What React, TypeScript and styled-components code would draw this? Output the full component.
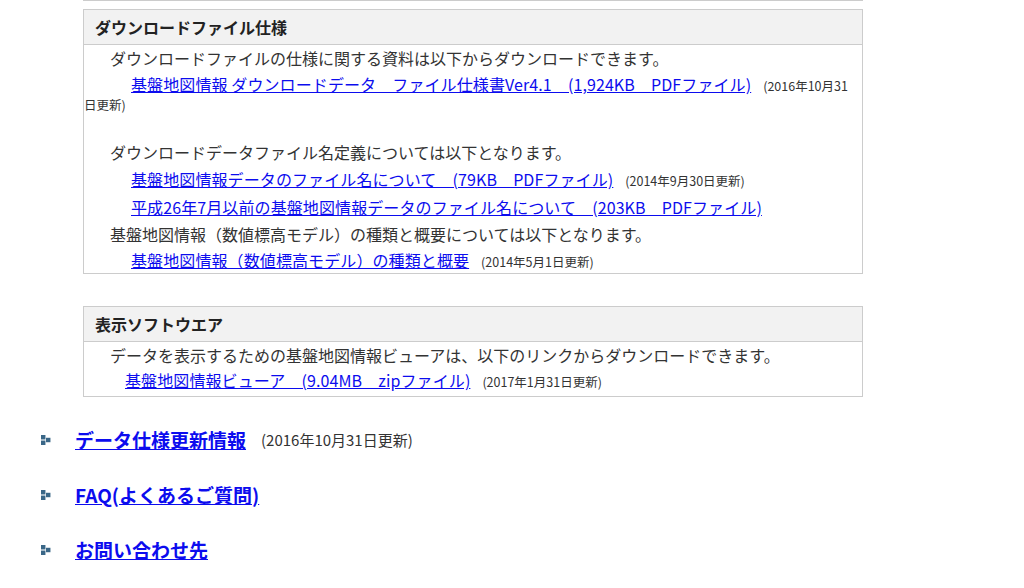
import React from "react";
import styled, { createGlobalStyle } from "styled-components";

const Global = createGlobalStyle`
  html, body { margin: 0; padding: 0; background: #ffffff; }
  body {
    font-family: "Noto Sans CJK JP", "Noto Sans", "Liberation Sans", sans-serif;
    color: #333333;
    font-size: 16px;
  }
  a { color: #0c0cee; }
`;

const Page = styled.div`
  width: 1024px;
  height: 588px;
  overflow: hidden;
`;

const Content = styled.div`
  margin-left: 83px;
  width: 780px;
`;

const PrevEdge = styled.div`
  height: 1px;
  background: #cccccc;
`;

const Box = styled.section<{ $gap: number }>`
  margin-top: ${(p) => p.$gap}px;
  border: 1px solid #cccccc;
  background: #ffffff;
`;

const BoxHeader = styled.h3`
  margin: 0;
  height: 34px;
  line-height: 34px;
  padding-left: 11px;
  background: #f2f2f2;
  border-bottom: 1px solid #cccccc;
  font-size: 16px;
  font-weight: bold;
  color: #222222;
`;

const BoxBody = styled.div<{ $padBottom?: number }>`
  padding-bottom: ${(p) => p.$padBottom ?? 0}px;
`;

const Line = styled.p<{ $indent: number; $lh: number; $mt?: number }>`
  margin: ${(p) => p.$mt ?? 0}px 0 0 0;
  padding-left: ${(p) => p.$indent}px;
  line-height: ${(p) => p.$lh}px;
  height: ${(p) => p.$lh}px;
  white-space: nowrap;
`;

const WrapPara = styled.p<{ $indent: number; $lh: number; $mt?: number }>`
  margin: ${(p) => p.$mt ?? 0}px 0 0 0;
  text-indent: ${(p) => p.$indent}px;
  line-height: ${(p) => p.$lh}px;
  height: ${(p) => p.$lh * 2}px;
`;

const DocLink = styled.a`
  font-size: 16px;
  color: #0c0cee;
  text-decoration: underline;
  letter-spacing: 0.1px;
`;

const DateNote = styled.span<{ $ml: number }>`
  font-size: 12.5px;
  line-height: 1;
  margin-left: ${(p) => p.$ml}px;
  color: #333333;
`;

const NavList = styled.ul`
  list-style: none;
  margin: 15px 0 0 0;
  padding: 0;
`;

const NavItem = styled.li`
  display: flex;
  align-items: center;
  height: 55px;
  padding-left: 41px;
`;

const Bullet = styled.svg`
  width: 10px;
  height: 10px;
  flex: none;
  margin-right: 24px;
`;

const NavLink = styled.a`
  font-size: 19px;
  font-weight: bold;
  color: #0c0cee;
  text-decoration: underline;
  line-height: 24px;
`;

const NavDate = styled.span`
  font-size: 15px;
  margin-left: 15px;
  color: #333333;
`;

const BulletIcon = () => (
  <Bullet viewBox="0 0 9 9">
    <rect x="0" y="0" width="4" height="4" fill="#3a6787" />
    <rect x="0" y="5" width="4" height="4" fill="#3a6787" />
    <rect x="4.5" y="2.5" width="4" height="4" fill="#3a6787" />
  </Bullet>
);

export default function App() {
  return (
    <Page>
      <Global />
      <Content>
        <PrevEdge />
        <Box $gap={8}>
          <BoxHeader>ダウンロードファイル仕様</BoxHeader>
          <BoxBody>
            <Line $indent={26} $lh={26}>
              ダウンロードファイルの仕様に関する資料は以下からダウンロードできます。
            </Line>
            <WrapPara $indent={47} $lh={19} $mt={4}>
              <DocLink href="#">
                基盤地図情報 ダウンロードデータ　ファイル仕様書Ver4.1　(1,924KB　PDFファイル)
              </DocLink>
              <DateNote $ml={12}>
                (2016年10月31
                <br />
                日更新)
              </DateNote>
            </WrapPara>
            <Line $indent={26} $lh={26} $mt={26}>
              ダウンロードデータファイル名定義については以下となります。
            </Line>
            <Line $indent={47} $lh={28}>
              <DocLink href="#">基盤地図情報データのファイル名について　(79KB　PDFファイル)</DocLink>
              <DateNote $ml={12}>(2014年9月30日更新)</DateNote>
            </Line>
            <Line $indent={47} $lh={28}>
              <DocLink href="#">
                平成26年7月以前の基盤地図情報データのファイル名について　(203KB　PDFファイル)
              </DocLink>
            </Line>
            <Line $indent={26} $lh={26}>
              基盤地図情報（数値標高モデル）の種類と概要については以下となります。
            </Line>
            <Line $indent={47} $lh={26}>
              <DocLink href="#">基盤地図情報（数値標高モデル）の種類と概要</DocLink>
              <DateNote $ml={12}>(2014年5月1日更新)</DateNote>
            </Line>
          </BoxBody>
        </Box>
        <Box $gap={32}>
          <BoxHeader>表示ソフトウエア</BoxHeader>
          <BoxBody $padBottom={4}>
            <Line $indent={26} $lh={26}>
              データを表示するための基盤地図情報ビューアは、以下のリンクからダウンロードできます。
            </Line>
            <Line $indent={41} $lh={24}>
              <DocLink href="#">基盤地図情報ビューア　(9.04MB　zipファイル)</DocLink>
              <DateNote $ml={12}>(2017年1月31日更新)</DateNote>
            </Line>
          </BoxBody>
        </Box>
      </Content>
      <NavList>
        <NavItem>
          <BulletIcon />
          <NavLink href="#">データ仕様更新情報</NavLink>
          <NavDate>(2016年10月31日更新)</NavDate>
        </NavItem>
        <NavItem>
          <BulletIcon />
          <NavLink href="#">FAQ(よくあるご質問)</NavLink>
        </NavItem>
        <NavItem>
          <BulletIcon />
          <NavLink href="#">お問い合わせ先</NavLink>
        </NavItem>
      </NavList>
    </Page>
  );
}
